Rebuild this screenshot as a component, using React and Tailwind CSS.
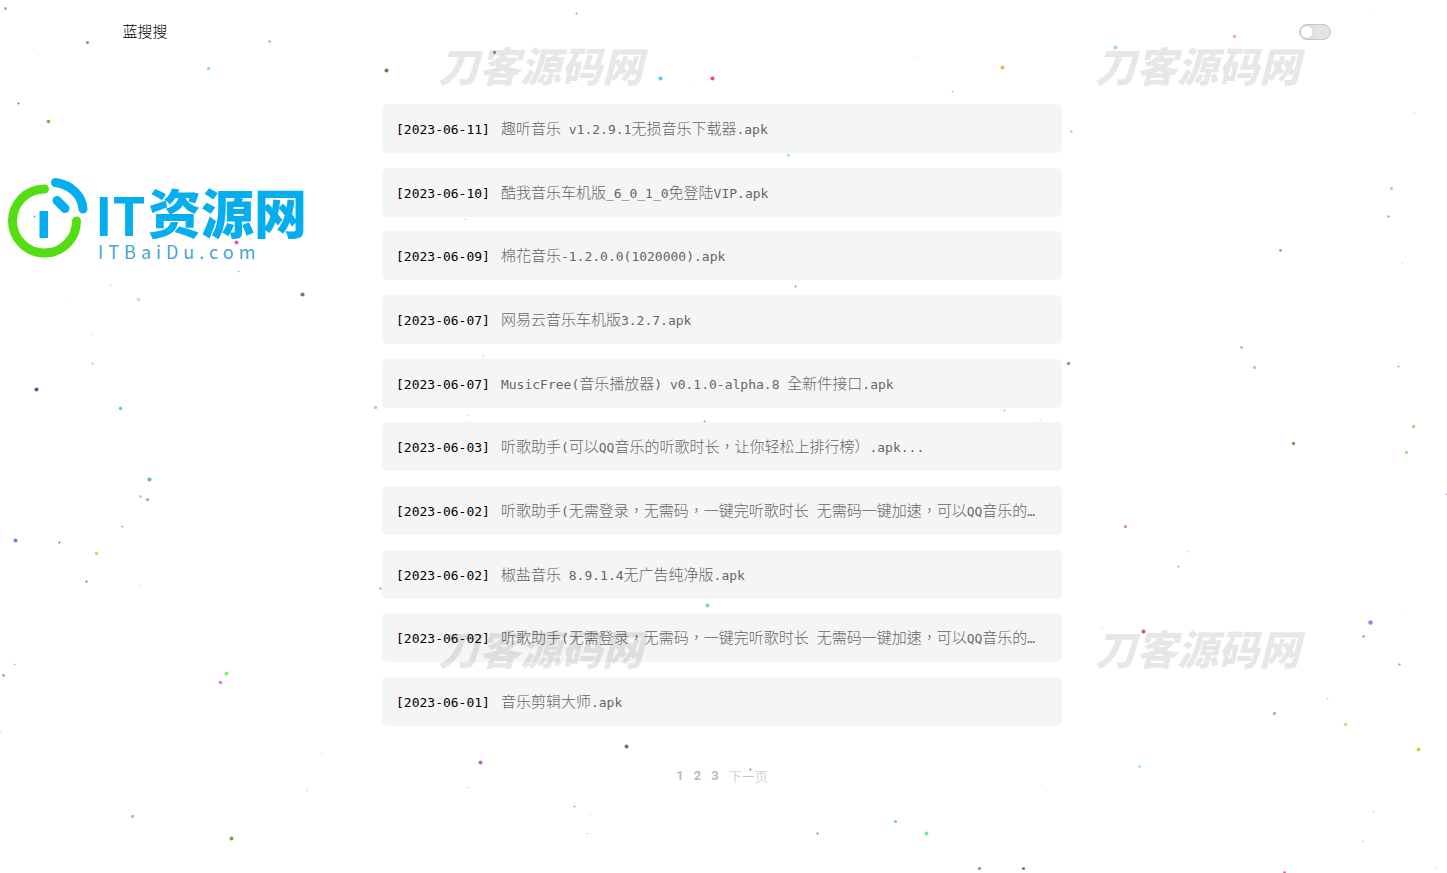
import React, { useState } from 'react';

const results = [
  { date: '2023-06-11', name: '趣听音乐 v1.2.9.1无损音乐下载器.apk' },
  { date: '2023-06-10', name: '酷我音乐车机版_6_0_1_0免登陆VIP.apk' },
  { date: '2023-06-09', name: '棉花音乐-1.2.0.0(1020000).apk' },
  { date: '2023-06-07', name: '网易云音乐车机版3.2.7.apk' },
  { date: '2023-06-07', name: 'MusicFree(音乐播放器) v0.1.0-alpha.8 全新件接口.apk' },
  { date: '2023-06-03', name: '听歌助手(可以QQ音乐的听歌时长，让你轻松上排行榜）.apk...' },
  { date: '2023-06-02', name: '听歌助手(无需登录，无需码，一键完听歌时长 无需码一键加速，可以QQ音乐的…' },
  { date: '2023-06-02', name: '椒盐音乐 8.9.1.4无广告纯净版.apk' },
  { date: '2023-06-02', name: '听歌助手(无需登录，无需码，一键完听歌时长 无需码一键加速，可以QQ音乐的…' },
  { date: '2023-06-01', name: '音乐剪辑大师.apk' },
];

// x, y, radius, color
const particles = [
  [5, 8, 1.5, '#a5a0ea'], [87, 42, 1.5, '#6cae4b'], [38, 54, 0.5, '#c9c9c9'], [269, 41, 1, '#7b85b5'],
  [208, 68, 1.6, '#69ef97'], [18, 103, 1, '#7d6fa0'], [48, 121, 1.8, '#4fc832'], [386, 70, 2, '#7d7a4c'],
  [494, 52, 1.4, '#5b88b8'], [576, 13, 1, '#8fb96a'], [660, 78, 2.1, '#42d9f5'], [712, 78, 2, '#f5455f'],
  [692, 86, 0.6, '#dcdcf4'], [914, 57, 0.5, '#bbbbbb'], [952, 91, 0.8, '#c9a79c'], [1002, 67, 2, '#efb254'],
  [1115, 47, 2, '#92dfea'], [1234, 36, 1.7, '#f59ae8'], [1375, 13, 0.5, '#d5d5d5'], [788, 155, 1.2, '#55f0e8'],
  [465, 219, 0.7, '#b5b5b5'], [795, 286, 1, '#948a8a'], [34, 216, 1, '#8f7bea'], [236, 242, 2, '#dd52c4'],
  [238, 271, 0.8, '#48e86a'], [110, 285, 0.9, '#cfc8f5'], [138, 299, 2, '#f8cfdf'], [302, 294, 2.1, '#8b7068'],
  [68, 303, 0.9, '#f7f9b5'], [92, 334, 1, '#ddd5fa'], [92, 363, 1, '#7fe872'], [36, 389, 2.1, '#5f55b5'],
  [120, 408, 1.7, '#4fde67'], [375, 407, 1.8, '#ccd18f'], [149, 479, 2, '#5ccb6c'], [140, 496, 1.5, '#8cf58a'],
  [147, 499, 1.6, '#86b5a5'], [122, 526, 0.8, '#b56a85'], [15, 540, 2, '#5c8edb'], [59, 542, 0.9, '#6d6d62'],
  [96, 553, 1.7, '#bce05c'], [86, 581, 1, '#6058b5'], [139, 585, 0.8, '#b8f5b2'], [380, 588, 1, '#c0697a'],
  [14, 664, 0.8, '#d98aa5'], [3, 675, 1.4, '#a8b25c'], [226, 673, 2, '#6cf56e'], [220, 682, 1.7, '#dd72f5'],
  [321, 753, 0.9, '#ddd5fa'], [307, 790, 0.9, '#b5e59a'], [132, 816, 1.7, '#f09ad8'], [231, 838, 1.9, '#62ab35'],
  [0, 732, 0.6, '#c5c5c5'], [483, 355, 1, '#dbc5df'], [468, 415, 0.9, '#b5e59a'], [704, 421, 1, '#8c8c8c'],
  [1004, 410, 0.9, '#dea5b5'], [1040, 419, 0.8, '#efcfae'], [707, 605, 2, '#92cf9f'], [626, 746, 2, '#587a82'],
  [480, 762, 2, '#c95cc9'], [468, 787, 0.8, '#c5c5c5'], [750, 769, 0.9, '#777777'], [574, 806, 1.1, '#6fcde5'],
  [590, 814, 0.7, '#cccccc'], [587, 833, 0.8, '#bcbccc'], [817, 833, 1.1, '#b85cd8'], [895, 821, 1.6, '#5cdcc5'],
  [926, 833, 1.9, '#79ec92'], [979, 868, 1.8, '#a29ad8'], [1023, 868, 1.6, '#b85496'], [1047, 791, 0.5, '#d5d5d5'],
  [1071, 131, 1, '#8badd8'], [1414, 112, 0.6, '#cccccc'], [1391, 188, 1.7, '#d1d589'], [1388, 216, 1.3, '#83c9a1'],
  [1280, 250, 1.4, '#d679b0'], [1402, 263, 0.6, '#c5c5c5'], [1068, 363, 1.8, '#a39a79'], [1241, 347, 1.2, '#53cfae'],
  [1254, 367, 1.6, '#dfa9b5'], [1398, 366, 1, '#5bd86e'], [1413, 426, 1.6, '#dab845'], [1293, 443, 1.7, '#8a9150'],
  [1406, 452, 1.4, '#78df62'], [1446, 494, 0.8, '#a59ac5'], [1125, 526, 1.5, '#ea7f7f'], [1187, 551, 0.9, '#ace8dc'],
  [1178, 566, 1.1, '#73e68a'], [1102, 628, 1, '#c0f0e5'], [1143, 631, 1.9, '#b0559f'], [1370, 622, 2.2, '#9188ee'],
  [1363, 636, 1.2, '#cc8365'], [1399, 664, 1.1, '#de63cf'], [1327, 698, 0.9, '#efd09e'], [1274, 713, 1.7, '#b8bd91'],
  [1345, 724, 1.8, '#eacb8e'], [1418, 749, 2, '#d5d044'], [1139, 766, 1.2, '#74e5c5'], [1373, 811, 0.7, '#c0b5f5'],
  [1362, 841, 0.9, '#cccccc'], [1284, 872, 1.2, '#d94ab5'], [1436, 868, 0.8, '#f0df95'], [1404, 609, 0.4, '#dddddd'],
];

// Latin characters are set in a monospaced face, a bit smaller than the Chinese ones
const MixedText = ({ text }) =>
  text.split(/([\x20-\x7e…]+)/).filter(Boolean).map((part, i) =>
    /^[\x20-\x7e…]/.test(part) ? (
      <span key={i} className="whitespace-pre font-['DejaVu_Sans_Mono',monospace] text-[13px]">{part}</span>
    ) : (
      part
    )
  );

const Particles = () => (
  <svg className="pointer-events-none absolute inset-0 h-full w-full" aria-hidden="true">
    <g transform="translate(0.5 0.5)">
      {particles.map(([x, y, r, color], i) => (
        <circle key={i} cx={x} cy={y} r={r} fill={color} />
      ))}
    </g>
  </svg>
);

const Watermark = ({ className }) => (
  <span
    aria-hidden="true"
    className={`pointer-events-none absolute whitespace-nowrap font-['Noto_Sans_CJK_SC',sans-serif] text-[41px] leading-[42px] font-black italic text-black/10 ${className}`}
  >
    刀客源码网
  </span>
);

const SiteLogo = () => (
  <svg
    className="pointer-events-none absolute top-[170px] left-0"
    width="320"
    height="100"
    viewBox="0 0 320 100"
    role="img"
    aria-label="IT资源网"
  >
    <g fill="none" strokeLinecap="round">
      <path d="M44.500 19A32 32 0 1 0 76.500 51" stroke="#55dd14" strokeWidth="9" />
      <path d="M55.500 12.500C71 15 82 25 83 39" stroke="#04aeef" strokeWidth="9" />
      <path d="M57 30.500L65 38.500" stroke="#04aeef" strokeWidth="9" />
    </g>
    <path d="M39.500 41H48V68H39.500Z" fill="#04aeef" />
    <text x="95" y="66" fill="#04aeef" className="font-['Noto_Sans_CJK_SC',sans-serif] text-[53px] font-bold">
      IT
    </text>
    <text x="148" y="64" fill="#04aeef" className="font-['Noto_Sans_CJK_SC',sans-serif] text-[53px] font-black">
      资源网
    </text>
    <text x="98" y="89" fill="#45a5cf" className="font-['Noto_Sans_CJK_SC',sans-serif] text-[18px] tracking-[5px]">
      ITBaiDu.com
    </text>
  </svg>
);

const ResultItem = ({ date, name }) => (
  <li>
    <a
      href="#"
      className="flex h-[49px] items-baseline gap-[11px] rounded-[5px] bg-[#f5f5f5] px-[14px] text-[15px] leading-[47px] font-light text-[#666]"
    >
      <time className="shrink-0 font-['DejaVu_Sans_Mono',monospace] text-[13px] font-normal text-black">[{date}]</time>
      <span className="truncate">
        <MixedText text={name} />
      </span>
    </a>
  </li>
);

const App = () => {
  const [dark, setDark] = useState(false);

  return (
    <div className="relative min-h-screen overflow-hidden bg-white font-['Noto_Sans_CJK_TC',sans-serif]">
      <Particles />

      {/* Header */}
      <header className="relative mx-auto flex h-[63px] max-w-[1214px] items-center justify-between pl-[6px]">
        <a href="#" className="text-[15px] font-light text-black">蓝搜搜</a>
        <label className="flex cursor-pointer">
          <input
            type="checkbox"
            aria-label="夜间模式"
            checked={dark}
            onChange={(e) => setDark(e.target.checked)}
            className="peer sr-only"
          />
          <span className="flex h-4 w-8 rounded-full border border-[#c8c8c8] bg-[#e4e4e4] peer-checked:justify-end">
            <span className="size-[14px] rounded-full border border-[#c8c8c8] bg-white" />
          </span>
        </label>
      </header>

      {/* Search results */}
      <main className="relative pt-[41px] pr-[3px]">
        <ul className="mx-auto flex min-h-[622px] max-w-[680px] flex-col justify-between">
          {results.map((item, i) => (
            <ResultItem key={i} {...item} />
          ))}
        </ul>

        {/* Pagination */}
        <nav className="mt-10 flex items-center justify-center gap-[10px] text-[13px] leading-5 text-[#bbb]">
          <a href="#" className="font-['Roboto',sans-serif] font-bold">1</a>
          <a href="#" className="font-['Roboto',sans-serif] font-bold">2</a>
          <a href="#" className="font-['Roboto',sans-serif] font-bold">3</a>
          <a href="#" className="font-light">下一页</a>
        </nav>
      </main>

      <SiteLogo />
      <Watermark className="top-[43px] left-[438px]" />
      <Watermark className="top-[43px] left-[1095px]" />
      <Watermark className="top-[626px] left-[438px]" />
      <Watermark className="top-[626px] left-[1095px]" />
    </div>
  );
};

export default App;
